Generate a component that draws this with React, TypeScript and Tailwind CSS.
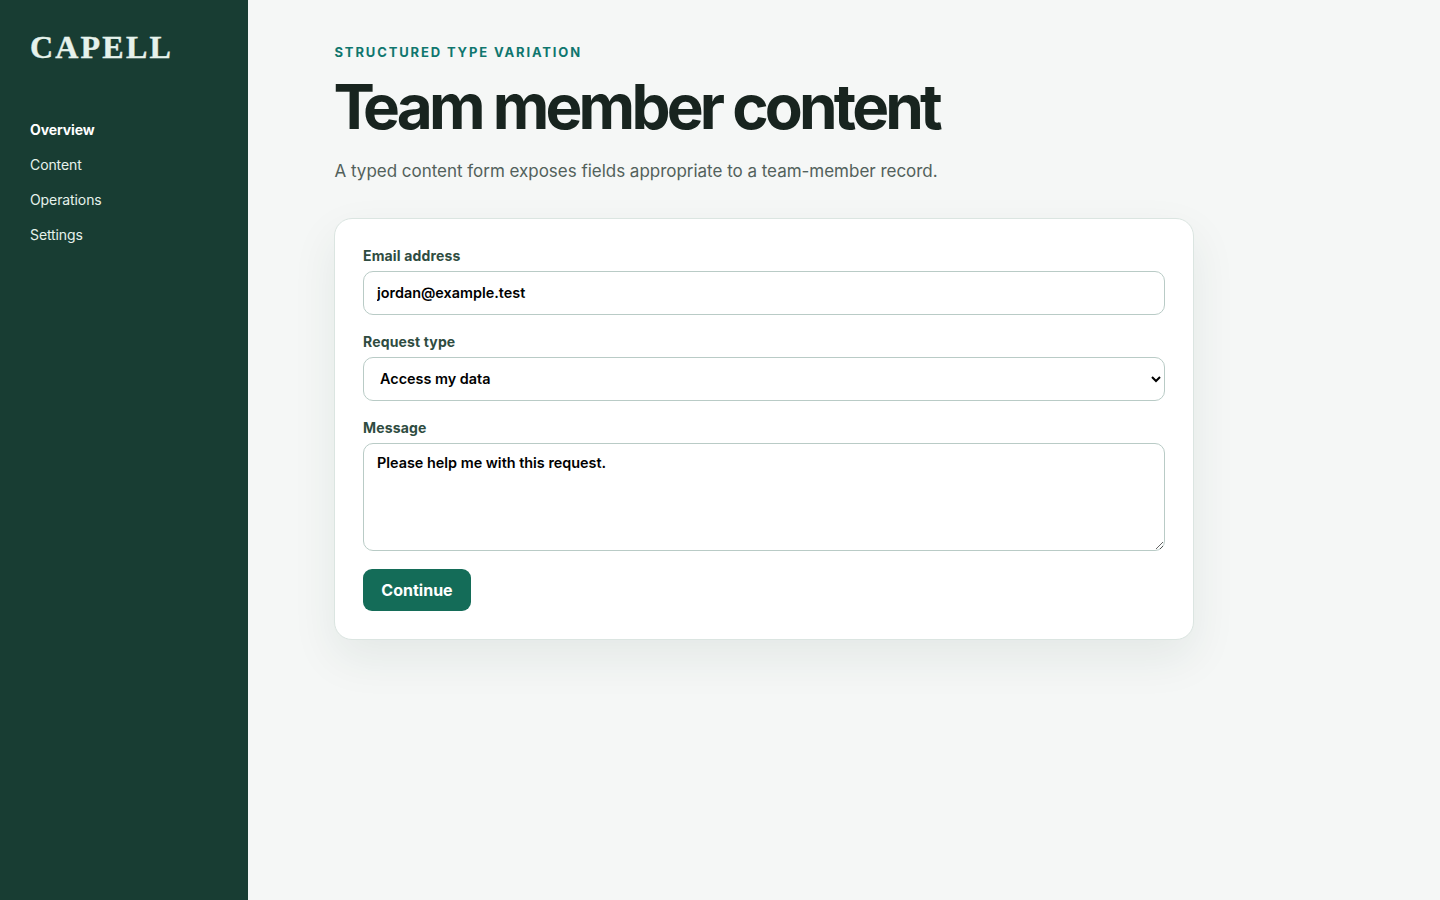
const NAV_ITEMS = ['Overview', 'Content', 'Operations', 'Settings'];

export default function App() {
  return (
    <div className="flex min-h-[900px] bg-[#f5f7f6] font-['Inter',sans-serif]">
      {/* Sidebar */}
      <aside className="w-[248px] shrink-0 bg-[#183d33] px-[30px] pt-[28px]">
        <div className="font-['Liberation_Serif',serif] text-[32px] leading-[38px] font-bold tracking-[2.2px] text-[#e6f2ec] [-webkit-text-stroke:0.4px_#e6f2ec]">CAPELL</div>
        <nav className="mt-[46px] flex flex-col">
          {NAV_ITEMS.map((item, i) => (
            <a
              key={item}
              href="#"
              className={i === 0 ? 'h-[35px] text-sm leading-[35px] font-bold tracking-[-0.1px] text-white' : 'h-[35px] text-sm leading-[35px] tracking-[-0.1px] text-[#e6f2ec]'}
            >
              {item}
            </a>
          ))}
        </nav>
      </aside>

      {/* Main */}
      <main className="flex-1 pt-[44px] pl-[86px]">
        <p className="pl-[0.5px] text-[13px] leading-[16px] font-bold tracking-[1.86px] text-[#0f766e]">STRUCTURED TYPE VARIATION</p>
        <h1 className="mt-[13px] -ml-[0.5px] text-[62px] leading-[68px] font-bold tracking-[-3.8px] text-[#18241f]">
          <span className="tracking-[-11.8px]">T</span>eam member content
        </h1>
        <p className="mt-[15px] pl-[0.5px] text-[17px] leading-[30px] tracking-[-0.02px] text-[#52615b]">A typed content form exposes fields appropriate to a team-member record.</p>

        <form className="mt-[32px] flex w-[860px] flex-col rounded-[18px] border border-[#dbe5e1] bg-white px-[28px] pt-[27px] pb-[28px] shadow-[0_18px_45px_rgba(24,61,51,0.08)]">
          <label className="mb-[5px] text-sm leading-[20px] font-bold tracking-[0.15px] text-[#2f4c41]" htmlFor="email">Email address</label>
          <input
            id="email"
            defaultValue="jordan@example.test"
            className="h-[44px] w-full rounded-[10px] border border-[#b9cbc6] bg-white px-[13px] pb-[2px] text-[14.4px] font-semibold text-black outline-none"
          />

          <label className="mt-[17px] mb-[5px] text-sm leading-[20px] font-bold tracking-[0.15px] text-[#2f4c41]" htmlFor="type">Request type</label>
          <select
            id="type"
            defaultValue="access"
            className="h-[44px] w-full appearance-auto rounded-[10px] border border-[#b9cbc6] bg-white pr-[13px] pb-[2px] pl-[12px] text-[14.4px] font-semibold text-black outline-none"
          >
            <option value="access">Access my data</option>
          </select>

          <label className="mt-[17px] mb-[5px] text-sm leading-[20px] font-bold tracking-[0.15px] text-[#2f4c41]" htmlFor="message">Message</label>
          <textarea
            id="message"
            defaultValue="Please help me with this request."
            className="h-[108px] w-full rounded-[10px] border border-[#b9cbc6] bg-white px-[13px] pt-[8px] pb-[9px] text-[14.4px] font-semibold text-black outline-none"
          />

          <button type="button" className="mt-[18px] h-[42px] w-[108px] rounded-[9px] bg-[#146c58] text-base font-bold text-white">Continue</button>
        </form>
      </main>
    </div>
  );
}
